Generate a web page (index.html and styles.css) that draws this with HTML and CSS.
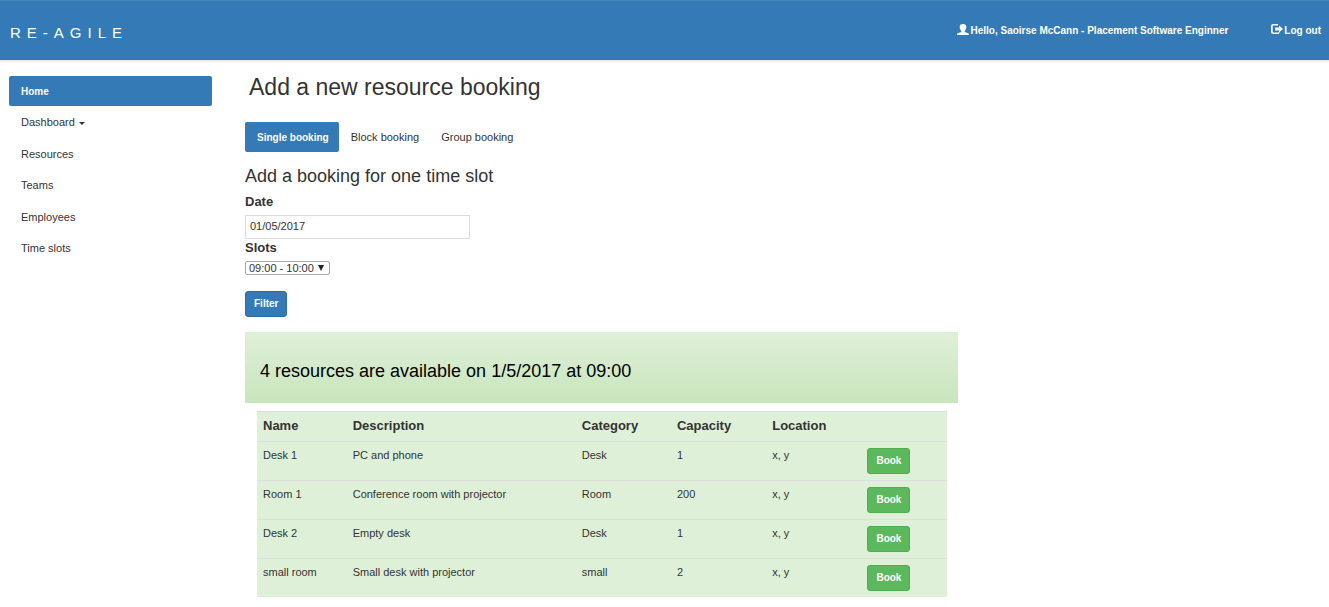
FILE: index.html
```html
<!DOCTYPE html>
<html lang="en">
<head>
<meta charset="utf-8">
<meta name="viewport" content="width=device-width, initial-scale=1">
<title>Re-Agile</title>
<link rel="stylesheet" href="styles.css">
</head>
<body>
<header class="topbar">
  <a class="brand" href="#">RE-AGILE</a>
  <nav class="account" aria-label="Account">
    <a class="account-link" href="#"><svg class="icon" viewBox="0 0 12 12" aria-hidden="true"><path d="M6 0C3.800 0 2.700 1.200 2.700 3.100c0 1.600.6 3 1.600 3.800v1.200L.8 9.200Q0 9.600 0 10.400V11h12v-.6q0-.8-.8-1.200L7.700 8.100V6.900c1-.8 1.600-2.200 1.600-3.800C9.300 1.200 8.200 0 6 0z"/></svg><span>Hello, Saoirse McCann - Placement Software Enginner</span></a>
    <a class="account-link logout" href="#"><svg class="icon" viewBox="0 0 12 12" aria-hidden="true"><path d="M7 0H2.200Q0 0 0 2.200v5.600Q0 10 2.200 10H6.500q2 0 2-1.500V8L6.800 8.400H2.500q-.8 0-.8-.8V2.400q0-.8.8-.8H7z"/><path d="M8 1.500L12 5 8 8.500V6.500H4.200V3.500H8z"/></svg><span>Log out</span></a>
  </nav>
</header>
<div class="layout">
  <nav class="sidebar" aria-label="Main">
    <a class="pill active" href="#">Home</a>
    <a class="pill" href="#">Dashboard <span class="caret"></span></a>
    <a class="pill" href="#">Resources</a>
    <a class="pill" href="#">Teams</a>
    <a class="pill" href="#">Employees</a>
    <a class="pill" href="#">Time slots</a>
  </nav>
  <main class="content">
    <h1 class="page-title">Add a new resource booking</h1>
    <nav class="tabs" aria-label="Booking type">
      <a class="pill active" href="#">Single booking</a>
      <a class="pill" href="#">Block booking</a>
      <a class="pill" href="#">Group booking</a>
    </nav>
    <form class="filter">
      <h2 class="form-title">Add a booking for one time slot</h2>
      <label class="label" for="date">Date</label>
      <input class="date" id="date" type="text" value="01/05/2017">
      <label class="label" for="slot">Slots</label>
      <span class="select-wrap"><select class="slot" id="slot"><option>09:00 - 10:00</option></select></span>
      <button class="button primary" type="button">Filter</button>
    </form>
    <section class="summary"><h2 class="summary-title">4 resources are available on 1/5/2017 at 09:00</h2></section>
    <div class="results">
      <table class="table">
        <colgroup><col class="col-name"><col class="col-description"><col class="col-small"><col class="col-small"><col class="col-small"><col></colgroup>
        <thead><tr><th>Name</th><th>Description</th><th>Category</th><th>Capacity</th><th>Location</th><td></td></tr></thead>
        <tbody>
          <tr><td>Desk 1</td><td>PC and phone</td><td>Desk</td><td>1</td><td>x, y</td><td><button class="button success" type="button">Book</button></td></tr>
          <tr><td>Room 1</td><td>Conference room with projector</td><td>Room</td><td>200</td><td>x, y</td><td><button class="button success" type="button">Book</button></td></tr>
          <tr><td>Desk 2</td><td>Empty desk</td><td>Desk</td><td>1</td><td>x, y</td><td><button class="button success" type="button">Book</button></td></tr>
          <tr><td>small room</td><td>Small desk with projector</td><td>small</td><td>2</td><td>x, y</td><td><button class="button success" type="button">Book</button></td></tr>
        </tbody>
      </table>
    </div>
  </main>
</div>
</body>
</html>
```
FILE: styles.css
```css
* { box-sizing: border-box; }

body {
  margin: 0;
  background: #fff;
  color: #333;
  font: 11px/16px "Liberation Sans", Arial, sans-serif;
}

a { color: inherit; text-decoration: none; }

h1, h2 { margin: 0; font-weight: 400; }

.topbar {
  display: flex;
  align-items: center;
  justify-content: space-between;
  min-height: 61px;
  padding: 0 8px 0 10px;
  border-top: 1px solid #4887bd;
  border-bottom: 1px solid #e7e7e7;
  background: #337ab7;
  box-shadow: 0 1px 2px rgba(0, 0, 0, 0.08);
  color: #fff;
}

.brand {
  padding-top: 4px;
  font-size: 15px;
  line-height: 20px;
  letter-spacing: 6px;
}

.account { display: flex; gap: 43px; font-size: 10px; font-weight: 700; }

.account-link { display: flex; align-items: flex-start; gap: 2px; }

.logout { gap: 1px; }

.icon { width: 12px; height: 12px; margin-top: 1px; fill: currentColor; }

.layout {
  display: grid;
  grid-template-columns: 203px minmax(0, 713px);
  column-gap: 33px;
  padding: 15px 9px 0;
}

.sidebar {
  display: flex;
  flex-direction: column;
  align-self: start;
  justify-content: space-between;
  min-height: 187px;
}

.pill { padding: 7px 12px; border-radius: 2px; }

.active {
  padding-top: 8px;
  padding-bottom: 6px;
  background: #337ab7;
  color: #fff;
  font-size: 10px;
  font-weight: 700;
}

.caret {
  display: inline-block;
  margin-left: 1px;
  border-top: 3px solid;
  border-right: 3px solid transparent;
  border-left: 3px solid transparent;
  vertical-align: middle;
}

.page-title { padding-left: 4px; font-size: 23px; line-height: 22px; }

.tabs { display: flex; margin-top: 24px; }

.tabs .pill { padding-right: 10px; }

.filter { display: flex; flex-direction: column; align-items: flex-start; }

.form-title { margin-top: 14px; font-size: 18px; line-height: 20px; }

.label { font-size: 13px; font-weight: 700; line-height: 18px; margin-top: 7px; }

.date {
  width: 225px;
  max-width: 100%;
  height: 24px;
  margin-top: 4px;
  padding: 0 4px 2px;
  border: 1px solid #ddd;
  color: inherit;
  font: inherit;
}

.date + .label { margin-top: 0; }

.select-wrap { position: relative; display: flex; margin-top: 4px; }

.select-wrap::after {
  content: "";
  position: absolute;
  top: 4px;
  right: 6px;
  border-top: 6px solid #222;
  border-right: 3px solid transparent;
  border-left: 3px solid transparent;
}

.slot {
  appearance: none;
  width: 85px;
  height: 14px;
  padding: 0 3px;
  border: 1px solid #a9a9a9;
  border-radius: 2px;
  background: #fff;
  color: #333;
  font: 11px/12px "Liberation Sans", Arial, sans-serif;
}

.button {
  height: 26px;
  padding: 0 8px;
  border: 1px solid;
  border-radius: 3px;
  color: #fff;
  font: 700 10px/16px "Liberation Sans", Arial, sans-serif;
}

.primary { margin-top: 16px; border-color: #2e6da4; background: #337ab7; }

.success { display: block; border-color: #4cae4c; background: #5cb85c; }

.summary {
  margin-top: 15px;
  padding: 28px 15px 21px;
  background: linear-gradient(#dff0d8, #c8e5bc);
  color: #000;
}

.summary-title { font-size: 18px; line-height: 22px; }

.results { margin: 8px 11px 10px 12px; }

.table {
  width: 100%;
  border-collapse: collapse;
  table-layout: fixed;
  background: #dff0d8;
}

.col-name { width: 13%; }
.col-description { width: 33.2%; }
.col-small { width: 13.8%; }

.table tr { border-top: 1px solid #ddd; }

.table th, .table td { padding: 6px; line-height: 14px; text-align: left; vertical-align: top; }

.table th { padding-bottom: 8px; font-size: 13px; line-height: 15px; }
```
